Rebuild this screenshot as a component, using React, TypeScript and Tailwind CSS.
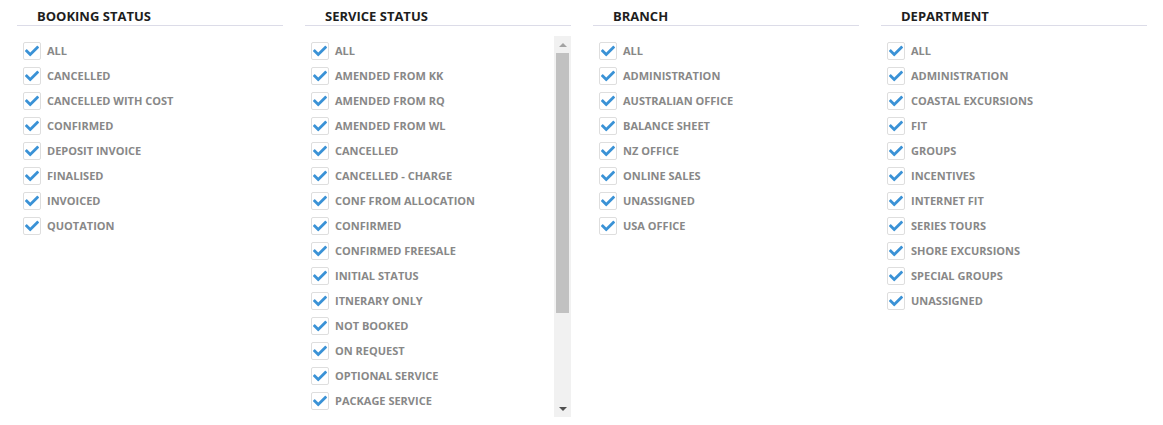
import React, { useState } from 'react';
import { FaCheck } from 'react-icons/fa';

interface FilterColumnProps {
  title: string;
  items: string[];
  scroll?: boolean;
}

const bookingStatus = ['ALL', 'CANCELLED', 'CANCELLED WITH COST', 'CONFIRMED', 'DEPOSIT INVOICE', 'FINALISED', 'INVOICED', 'QUOTATION'];

const serviceStatus = [
  'ALL', 'AMENDED FROM KK', 'AMENDED FROM RQ', 'AMENDED FROM WL', 'CANCELLED', 'CANCELLED - CHARGE',
  'CONF FROM ALLOCATION', 'CONFIRMED', 'CONFIRMED FREESALE', 'INITIAL STATUS', 'ITNERARY ONLY',
  'NOT BOOKED', 'ON REQUEST', 'OPTIONAL SERVICE', 'PACKAGE SERVICE', 'PENDING',
];

const branches = ['ALL', 'ADMINISTRATION', 'AUSTRALIAN OFFICE', 'BALANCE SHEET', 'NZ OFFICE', 'ONLINE SALES', 'UNASSIGNED', 'USA OFFICE'];

const departments = [
  'ALL', 'ADMINISTRATION', 'COASTAL EXCURSIONS', 'FIT', 'GROUPS', 'INCENTIVES', 'INTERNET FIT',
  'SERIES TOURS', 'SHORE EXCURSIONS', 'SPECIAL GROUPS', 'UNASSIGNED',
];

const CheckRow = ({ label }: { label: string }) => {
  const [checked, setChecked] = useState(true);
  return (
    <label className="flex h-[25px] items-center gap-[6px] pl-[6px] cursor-pointer select-none" onClick={() => setChecked(!checked)}>
      <span className="flex h-[18px] w-[18px] shrink-0 items-center justify-center rounded-[2px] border border-[#dedede] bg-white">
        {checked && <FaCheck className="h-[14px] w-[14px] text-[#3a92d6]" />}
      </span>
      <span className="text-[11px] font-bold leading-none text-[#888888] whitespace-nowrap">{label}</span>
    </label>
  );
};

// fake scrollbar, drawn like the classic one in the picture
const ScrollBar = () => (
  <div className="flex w-[17px] shrink-0 flex-col bg-[#f1f1f1]">
    <div className="flex h-[17px] items-center justify-center">
      <div className="h-0 w-0 border-x-[4px] border-b-[4px] border-x-transparent border-b-[#a3a3a3]" />
    </div>
    <div className="mx-[2px] h-[260px] bg-[#c1c1c1]" />
    <div className="flex-grow" />
    <div className="flex h-[17px] items-center justify-center">
      <div className="h-0 w-0 border-x-[4px] border-t-[4px] border-x-transparent border-t-[#505050]" />
    </div>
  </div>
);

const FilterColumn: React.FC<FilterColumnProps> = ({ title, items, scroll }) => (
  <div className="w-[266px] shrink-0">
    <div className="border-b border-[#dcdce8] pl-[20px] pt-[8px] text-[13px] font-bold leading-[17px] text-[#1e1e1e]">{title}</div>
    {scroll ? (
      <div className="mt-[10px] flex h-[381px]">
        <div className="flex-grow overflow-hidden pt-[2px]">
          {items.map((it) => <CheckRow key={it} label={it} />)}
        </div>
        <ScrollBar />
      </div>
    ) : (
      <div className="mt-[10px] pt-[2px]">
        {items.map((it) => <CheckRow key={it} label={it} />)}
      </div>
    )}
  </div>
);

export default function App() {
  return (
    <div className="flex h-[425px] gap-[22px] bg-white pl-[17px]" style={{ fontFamily: '"Open Sans", "Liberation Sans", sans-serif' }}>
      <FilterColumn title="BOOKING STATUS" items={bookingStatus} />
      <FilterColumn title="SERVICE STATUS" items={serviceStatus} scroll />
      <FilterColumn title="BRANCH" items={branches} />
      <FilterColumn title="DEPARTMENT" items={departments} />
    </div>
  );
}
